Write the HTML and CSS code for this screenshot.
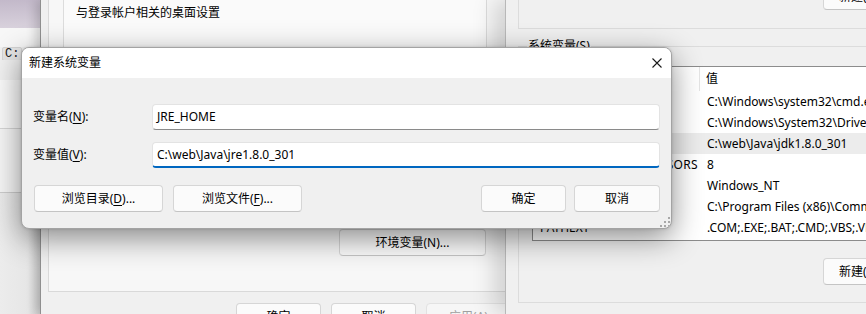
FILE: index.html
```html
<!DOCTYPE html>
<html lang="zh-CN">
<head>
<meta charset="utf-8">
<title>新建系统变量</title>
<link rel="stylesheet" href="styles.css">
</head>
<body>
<div class="desk">
  <div class="win wl">
    <div class="wl-a"></div>
    <div class="wl-b"></div>
    <div class="wl-c"><span class="chip">C:</span></div>
    <div class="wl-d"></div>
    <div class="wl-e"></div>
    <div class="wl-f"></div>
    <div class="wl-g"></div>
  </div>

  <div class="win wm">
    <div class="tabpage">
      <div class="grp">
        <div class="grp-text">与登录帐户相关的桌面设置</div>
      </div>
      <button class="btn env">环境变量(N)...</button>
    </div>
    <div class="wm-foot">
      <button class="btn fbtn">确定</button>
      <button class="btn fbtn">取消</button>
      <button class="btn fbtn dis">应用(A)</button>
    </div>
  </div>

  <div class="win wr">
    <div class="ugrp">
      <button class="btn newbtn top">新建(W)...</button>
    </div>
    <div class="sgrp">
      <div class="sgrp-label">系统变量(S)</div>
      <div class="list">
        <div class="lrow lhead"><span class="cn">变量</span><span class="cv">值</span></div>
        <div class="lrow"><span class="cn">ComSpec</span><span class="cv">C:\Windows\system32\cmd.exe</span></div>
        <div class="lrow"><span class="cn">DriverData</span><span class="cv">C:\Windows\System32\Drivers\DriverData</span></div>
        <div class="lrow sel"><span class="cn">JAVA_HOME</span><span class="cv">C:\web\Java\jdk1.8.0_301</span></div>
        <div class="lrow"><span class="cn wide">NUMBER_OF_PROCESSORS</span><span class="cv">8</span></div>
        <div class="lrow"><span class="cn">OS</span><span class="cv">Windows_NT</span></div>
        <div class="lrow"><span class="cn">Path</span><span class="cv">C:\Program Files (x86)\Common Files\Oracle\Java\javapath</span></div>
        <div class="lrow"><span class="cn">PATHEXT</span><span class="cv">.COM;.EXE;.BAT;.CMD;.VBS;.VBE;.JS;.JSE;.WSF;.WSH;.MSC</span></div>
        <div class="lrow"><span class="cn">PROCESSOR_ARCHITECTURE</span><span class="cv">AMD64</span></div>
      </div>
      <button class="btn newbtn bottom">新建(W)...</button>
    </div>
  </div>

  <div class="dlg">
    <div class="dlg-title">
      <span class="dlg-caption">新建系统变量</span>
      <svg class="dlg-close" width="10" height="10" viewBox="0 0 10 10"><path d="M0.5 0.5 L9.5 9.5 M9.5 0.5 L0.5 9.5" stroke="#1a1a1a" stroke-width="1.1" fill="none"/></svg>
    </div>
    <div class="dlg-body">
      <div class="fields">
        <label class="flabel">变量名(<u>N</u>):</label>
        <div class="input">JRE_HOME</div>
        <label class="flabel">变量值(<u>V</u>):</label>
        <div class="input focus">C:\web\Java\jre1.8.0_301</div>
      </div>
      <div class="dlg-btns">
        <button class="btn browse">浏览目录(<u>D</u>)...</button>
        <button class="btn browse">浏览文件(<u>F</u>)...</button>
        <span class="spacer"></span>
        <button class="btn ok">确定</button>
        <button class="btn cancel">取消</button>
      </div>
      <svg class="grip" width="10" height="10" viewBox="0 0 10 10">
        <rect x="8" y="0" width="2" height="2" fill="#a8a8a8"/>
        <rect x="4" y="4" width="2" height="2" fill="#a8a8a8"/>
        <rect x="8" y="4" width="2" height="2" fill="#a8a8a8"/>
        <rect x="0" y="8" width="2" height="2" fill="#a8a8a8"/>
        <rect x="4" y="8" width="2" height="2" fill="#a8a8a8"/>
        <rect x="8" y="8" width="2" height="2" fill="#a8a8a8"/>
      </svg>
    </div>
  </div>
</div>
</body>
</html>
```

FILE: styles.css
```css
* { box-sizing: border-box; }
html, body { margin: 0; padding: 0; }
body {
  width: 866px;
  height: 314px;
  overflow: hidden;
  background: #f0f0f0;
  font-family: "Noto Sans", "Noto Sans CJK SC", sans-serif;
  font-size: 12px;
  line-height: 16px;
  color: #000;
}

/* generic button */
.btn {
  font: inherit; color: #000; line-height: 16px;
  background: #fbfbfb; border: 1px solid #d6d6d6; border-bottom-color: #c4c4c4;
  border-radius: 4px; padding: 0; margin: 0;
}

.desk { position: relative; width: 866px; height: 314px; overflow: hidden; }
.win { position: absolute; top: 0; height: 314px; overflow: hidden; }

/* left window */
.wl { left: 0; width: 40px; display: flex; flex-direction: column; background: #f2f2f2; }
.wl-a { height: 28px; background: linear-gradient(180deg, #c3b9ca 0%, #d8d1dc 100%); }
.wl-b { height: 19px; background: #f7f7f7; }
.wl-c { height: 13px; background: #f1f1f1; display: flex; align-items: center; }
.chip {
  margin-left: 2px; width: 20px; height: 14px; background: #e6e6e6;
  border: 1px solid #d4d4d4; border-radius: 2px;
  font-family: "Liberation Mono", monospace; font-size: 12px; line-height: 12px;
  padding-left: 2px; color: #222;
}
.wl-d { height: 20px; background: #f1f1f1; }
.wl-e { height: 49px; background: #fafafa; border-bottom: 1px solid #d6d6d6; }
.wl-f { height: 64px; background: #f6f6f6; border-bottom: 1px solid #cdcdcd; box-shadow: 0 3px 0 -2px #d9d9d9; }
.wl-g { flex: 1; background: linear-gradient(90deg, #ececec 0%, #e6e6e6 70%, #cfcfcf 100%); }

/* middle window */
.wm {
  left: 40px; width: 470px; background: #f0f0f0;
  border-left: 1px solid #8f8f8f;
  box-shadow: -4px 0 10px rgba(0,0,0,0.18);
}
.tabpage {
  margin: -10px 0 0 7px; width: 480px; height: 302px;
  border: 1px solid #d9d9d9; background: #f7f7f7;
}
.grp {
  margin-left: 14px; width: 424px; height: 110px; margin-top: -10px;
  border: 1px solid #dcdcdc; background: #fafafa;
  padding: 23px 0 0 12px;
}
.btn.env { display: block; margin: 138px 0 0 290px; width: 147px; height: 27px; }
.wm-foot { display: flex; gap: 10px; padding: 11px 0 0 195px; }
.btn.fbtn { width: 85px; height: 27px; flex: none; }
.btn.dis { color: #a0a0a0; background: #f6f6f6; border-color: #e2e2e2; }

/* right window */
.wr {
  left: 505px; width: 361px; background: #f0f0f0;
  border-left: 1px solid #b8b8b8;
  box-shadow: -10px 0 22px rgba(0,0,0,0.16);
  padding-left: 12px;
}
.ugrp {
  margin-top: -60px; width: 400px; height: 89px;
  border: 1px solid #dcdcdc; border-right: none;
  padding: 42px 0 0 304px;
}
.btn.newbtn { display: block; width: 80px; height: 27px; text-align: left; padding-left: 15px; }
.sgrp {
  margin-top: 17px; width: 400px; height: 257px;
  border: 1px solid #dcdcdc; border-right: none;
}
.sgrp-label {
  width: max-content; margin: -9px 0 0 8px; padding: 0 1px;
  background: #f0f0f0; line-height: 16px;
}
.list {
  margin: 12px 0 0 13px; width: 400px; height: 175px;
  border: 1px solid #8c8c8c; border-right: none; background: #fff;
  overflow: hidden;
}
.lrow { display: flex; height: 21px; align-items: center; white-space: nowrap; }
.lrow.lhead { height: 24px; }
.lrow.sel { background: #ececec; }
.cn { width: 167px; flex: none; padding-left: 7px; overflow: hidden; }
.cn.wide { letter-spacing: 0.3px; }
.lhead .cn { border-right: 1px solid #e5e5e5; height: 24px; line-height: 24px; }
.cv { padding-left: 7px; }
.lhead .cv { padding-left: 6px; }
.btn.newbtn.bottom { margin: 17px 0 0 304px; }

/* dialog */
.dlg {
  position: absolute; left: 21px; top: 47px; width: 651px; height: 182px;
  border: 1px solid #a3a3a3; border-radius: 8px; overflow: hidden;
  background: #f0f0f0;
  box-shadow: 0 9px 30px rgba(0,0,0,0.45), 0 0 3px rgba(0,0,0,0.15);
  display: flex; flex-direction: column;
}
.dlg-title {
  height: 30px; flex: none; background: #fff;
  display: flex; align-items: center; padding: 0 9px 0 7px;
}
.dlg-caption { flex: 1; }
.dlg-close { display: block; }
.dlg-body { position: relative; flex: 1; padding: 26px 11px 0 11px; }
.fields {
  display: grid; grid-template-columns: 119px 1fr; row-gap: 12px;
  align-items: center;
}
.flabel { line-height: 26px; }
.input {
  height: 26px; background: #fff;
  border: 1px solid #e3e3e3; border-bottom-color: #8a8a8a; border-radius: 4px;
  padding: 0 4px; line-height: 24px; white-space: nowrap;
}
.input.focus { border-bottom: 2px solid #0067c0; line-height: 23px; }
.dlg-btns { display: flex; margin-top: 17px; }
.dlg-btns .btn { height: 27px; flex: none; }
.btn.browse { width: 129px; }
.btn.browse:first-child { margin-left: 1px; margin-right: 10px; }
.spacer { flex: 1; }
.btn.ok { width: 85px; margin-right: 8px; }
.btn.cancel { width: 86px; }
.grip { position: absolute; right: 1px; bottom: 1px; }
u { text-decoration-thickness: 1px; text-underline-offset: 2px; }
```
